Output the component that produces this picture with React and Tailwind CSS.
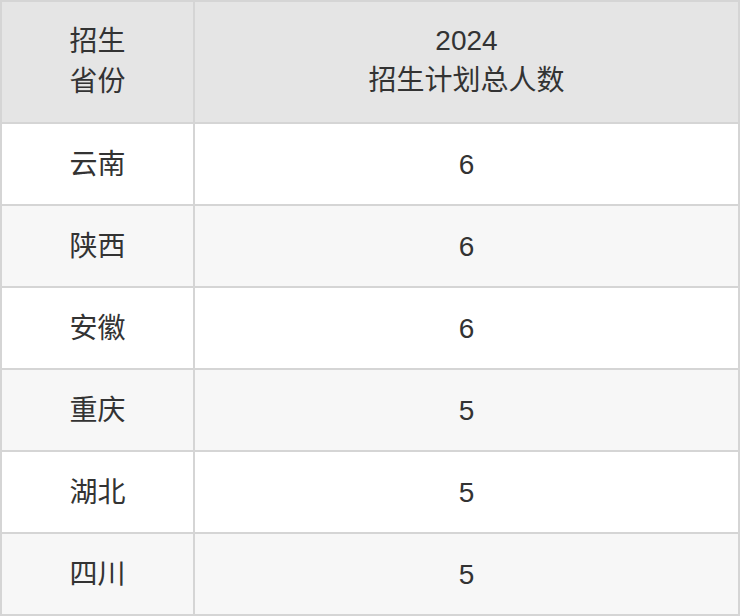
const rows = [
  { province: "云南", count: 6 },
  { province: "陕西", count: 6 },
  { province: "安徽", count: 6 },
  { province: "重庆", count: 5 },
  { province: "湖北", count: 5 },
  { province: "四川", count: 5 },
];

export default function App() {
  return (
    <div
      className="w-[740px] h-[616px] bg-white text-[#333333] text-[28px] leading-[37px]"
      style={{ fontFamily: '"Liberation Sans", "Noto Sans CJK SC", sans-serif' }}
    >
      <div className="border-2 border-[#d5d5d5]">
        <div className="flex h-[120px] bg-[#e5e5e5] leading-[40px]">
          <div className="w-[193px] border-r-2 border-[#d5d5d5] flex items-center justify-center text-center">
            <div>
              招生
              <br />
              省份
            </div>
          </div>
          <div className="flex-1 flex items-center justify-center text-center">
            <div className="pb-[3px]">
              2024
              <br />
              招生计划总人数
            </div>
          </div>
        </div>
        {rows.map((r, i) => (
          <div
            key={r.province}
            className={`flex h-[82px] border-t-2 border-[#d5d5d5] ${i % 2 === 1 ? "bg-[#f7f7f7]" : "bg-white"}`}
          >
            <div className="w-[193px] border-r-2 border-[#d5d5d5] flex items-center justify-center">
              {r.province}
            </div>
            <div className="flex-1 flex items-center justify-center">{r.count}</div>
          </div>
        ))}
      </div>
    </div>
  );
}
